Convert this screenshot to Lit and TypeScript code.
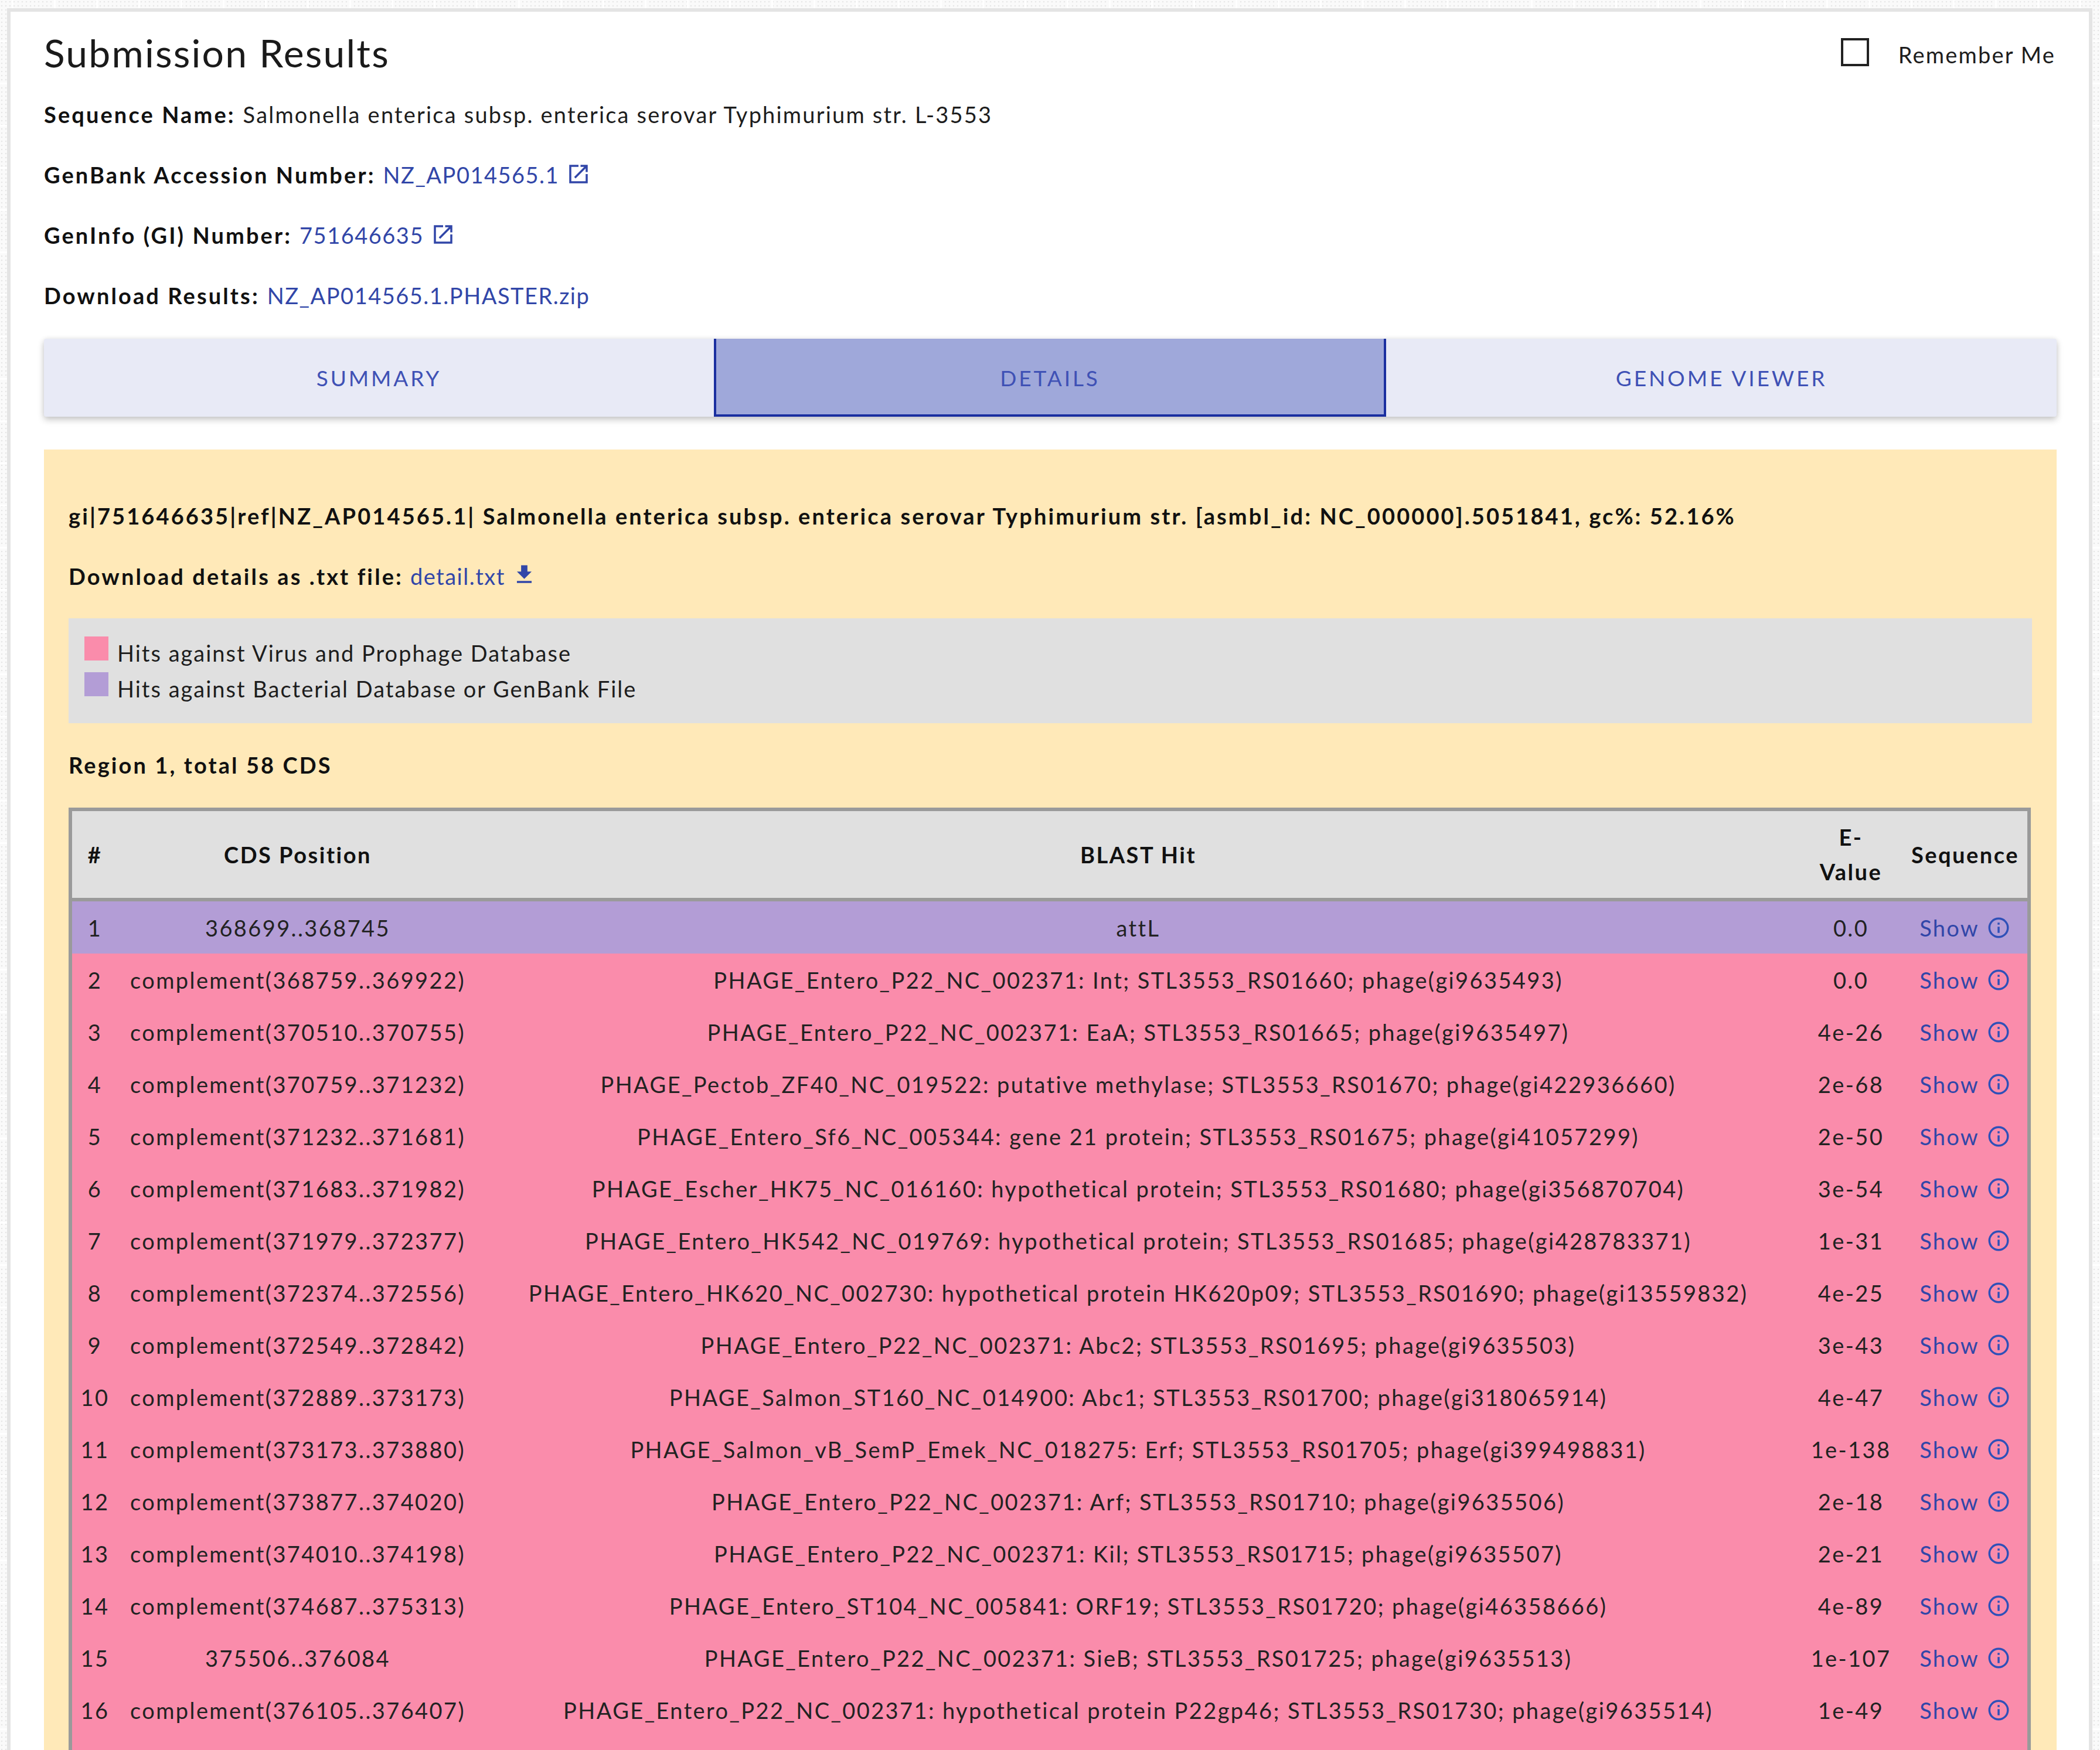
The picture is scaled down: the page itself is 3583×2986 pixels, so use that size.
import { LitElement, html, css } from "lit";
import { customElement } from "lit/decorators.js";

const ROWS: [string, string, string, string][] = [
  ["1", "368699..368745", "attL", "0.0"],
  ["2", "complement(368759..369922)", "PHAGE_Entero_P22_NC_002371: Int; STL3553_RS01660; phage(gi9635493)", "0.0"],
  ["3", "complement(370510..370755)", "PHAGE_Entero_P22_NC_002371: EaA; STL3553_RS01665; phage(gi9635497)", "4e-26"],
  ["4", "complement(370759..371232)", "PHAGE_Pectob_ZF40_NC_019522: putative methylase; STL3553_RS01670; phage(gi422936660)", "2e-68"],
  ["5", "complement(371232..371681)", "PHAGE_Entero_Sf6_NC_005344: gene 21 protein; STL3553_RS01675; phage(gi41057299)", "2e-50"],
  ["6", "complement(371683..371982)", "PHAGE_Escher_HK75_NC_016160: hypothetical protein; STL3553_RS01680; phage(gi356870704)", "3e-54"],
  ["7", "complement(371979..372377)", "PHAGE_Entero_HK542_NC_019769: hypothetical protein; STL3553_RS01685; phage(gi428783371)", "1e-31"],
  ["8", "complement(372374..372556)", "PHAGE_Entero_HK620_NC_002730: hypothetical protein HK620p09; STL3553_RS01690; phage(gi13559832)", "4e-25"],
  ["9", "complement(372549..372842)", "PHAGE_Entero_P22_NC_002371: Abc2; STL3553_RS01695; phage(gi9635503)", "3e-43"],
  ["10", "complement(372889..373173)", "PHAGE_Salmon_ST160_NC_014900: Abc1; STL3553_RS01700; phage(gi318065914)", "4e-47"],
  ["11", "complement(373173..373880)", "PHAGE_Salmon_vB_SemP_Emek_NC_018275: Erf; STL3553_RS01705; phage(gi399498831)", "1e-138"],
  ["12", "complement(373877..374020)", "PHAGE_Entero_P22_NC_002371: Arf; STL3553_RS01710; phage(gi9635506)", "2e-18"],
  ["13", "complement(374010..374198)", "PHAGE_Entero_P22_NC_002371: Kil; STL3553_RS01715; phage(gi9635507)", "2e-21"],
  ["14", "complement(374687..375313)", "PHAGE_Entero_ST104_NC_005841: ORF19; STL3553_RS01720; phage(gi46358666)", "4e-89"],
  ["15", "375506..376084", "PHAGE_Entero_P22_NC_002371: SieB; STL3553_RS01725; phage(gi9635513)", "1e-107"],
  ["16", "complement(376105..376407)", "PHAGE_Entero_P22_NC_002371: hypothetical protein P22gp46; STL3553_RS01730; phage(gi9635514)", "1e-49"],
];

const extIcon = html`<svg class="ext" viewBox="0 0 24 24" aria-hidden="true"><path fill="currentColor" d="M19 19H5V5h7V3H3v18h18v-9h-2v7zM14 3v2h3.59l-9.83 9.83 1.41 1.41L19 6.41V10h2V3h-7z"/></svg>`;
const dlIcon = html`<svg class="dl" viewBox="0 0 24 24" aria-hidden="true"><path fill="currentColor" d="M19 9h-4V3H9v6H5l7 7 7-7zM5 18v2h14v-2H5z"/></svg>`;
const infoIcon = html`<svg class="info" viewBox="0 0 24 24" aria-hidden="true"><path fill="currentColor" d="M11 7h2v2h-2zm0 4h2v6h-2zm1-9a10 10 0 1 0 0 20 10 10 0 0 0 0-20zm0 18a8 8 0 1 1 0-16 8 8 0 0 1 0 16z"/></svg>`;

@customElement("app-root")
export class AppRoot extends LitElement {
  static styles = css`
    :host {
      display: block;
      height: 2986px;
      overflow: hidden;
      box-sizing: border-box;
      padding: 14px 13px 0 12px;
      font-family: "Lato", "Open Sans", sans-serif;
      font-size: 38px;
      letter-spacing: 2.2px;
      color: #1d1d1d;
      background-color: #fafafa;
      background-image:
        linear-gradient(#fff 3px, transparent 3px),
        linear-gradient(90deg, #fff 3px, transparent 3px),
        radial-gradient(circle at 3px 3px, #e6e6e6 1.4px, transparent 1.6px);
      background-size: 72px 72px, 72px 72px, 7px 7px;
      background-position: 0 -3px, 20px 0, 0 0;
    }
    a { color: #3146a8; text-decoration: none; }
    .line a { letter-spacing: 1.5px; }
    .card {
      background: #fff;
      border: 6px solid #e4e4e4;
      border-bottom: none;
      padding: 0 55px 0 57px;
      height: 3000px;
      box-sizing: border-box;
    }
    .head {
      height: 126px;
      display: flex;
      justify-content: space-between;
      align-items: flex-start;
    }
    h2 {
      margin: 0;
      padding-top: 28px;
      font-size: 66px;
      line-height: 84px;
      font-weight: 400;
      letter-spacing: 2.2px;
      color: #1a1a1a;
    }
    .remember {
      display: flex;
      align-items: flex-start;
      padding-top: 45px;
      margin-right: 2px;
    }
    .box {
      width: 48px;
      height: 48px;
      box-sizing: border-box;
      border: 4px solid #222;
      margin-right: 50px;
    }
    .remember span { line-height: 57px; }
    .line { height: 103px; line-height: 97px; white-space: nowrap; }
    .card > .line { line-height: 99px; }
    .line b { font-weight: 700; color: #111; letter-spacing: 3.1px; }
    .label { margin-right: 1px; }
    .ext { width: 42px; height: 42px; vertical-align: -5px; margin-left: 12px; color: #3146a8; }
    .dl { width: 43px; height: 43px; vertical-align: -4px; margin-left: 11px; color: #3146a8; }
    .tabs {
      margin-top: 20px;
      height: 133px;
      display: grid;
      grid-template-columns: 1143px 1147px 1fr;
      background: #e8eaf6;
      border-radius: 4px;
      box-shadow: 0 5px 12px rgba(0, 0, 0, 0.22), 0 0 8px rgba(0, 0, 0, 0.06);
    }
    .tab {
      display: flex;
      align-items: center;
      justify-content: center;
      color: #3f51b5;
      letter-spacing: 3.9px;
      font-size: 37px;
    }
    .tab.active {
      background: #9fa8da;
      border: 4px solid #1a2fa0;
      border-top: none;
      padding-top: 4px;
      box-sizing: border-box;
    }
    .panel {
      margin-top: 56px;
      background: #ffe9b8;
      padding: 65px 42px 0;
      height: 2300px;
      box-sizing: border-box;
    }
    .legend {
      margin-top: 17px;
      height: 179px;
      box-sizing: border-box;
      padding: 31px 27px 0;
      background: #e0e0e0;
      letter-spacing: 2px;
    }
    .legend div { display: flex; height: 61px; align-items: flex-start; }
    .legend i {
      width: 41px;
      height: 41px;
      margin-right: 15px;
      flex: none;
    }
    .legend span { line-height: 56px; }
    .pink { background: #fa8cab; }
    .purple { background: #b39dd6; }
    .region { margin-top: 23px; }
    table {
      margin-top: 18px;
      width: 3348px;
      border-collapse: separate;
      border-spacing: 0;
      border: 6px solid #9a9a9a;
      table-layout: fixed;
    }
    th {
      background: #e0e0e0;
      height: 148px;
      padding: 0;
      border-bottom: 6px solid #9a9a9a;
      font-weight: 700;
      color: #111;
      line-height: 59px;
      letter-spacing: 2.5px;
    }
    td {
      height: 89px;
      padding: 0;
      text-align: center;
      white-space: nowrap;
      color: #222;
      letter-spacing: 2.4px;
    }
    .show { display: inline-flex; align-items: center; gap: 12px; letter-spacing: 2.2px; }
    .info { width: 42px; height: 42px; color: #2f50b8; }
    .c1 { width: 78px; }
    .c2 { width: 614px; }
    .c3 { width: 2254px; }
    .c4 { width: 178px; }
    .c5 { width: 212px; }
  `;

  render() {
    return html`
      <div class="card">
        <div class="head">
          <h2>Submission Results</h2>
          <div class="remember"><div class="box"></div><span>Remember Me</span></div>
        </div>
        <div class="line"><b class="label">Sequence Name:</b> Salmonella enterica subsp. enterica serovar Typhimurium str. L-3553</div>
        <div class="line"><b class="label">GenBank Accession Number:</b> <a>NZ_AP014565.1</a>${extIcon}</div>
        <div class="line"><b class="label">GenInfo (GI) Number:</b> <a>751646635</a>${extIcon}</div>
        <div class="line"><b class="label">Download Results:</b> <a>NZ_AP014565.1.PHASTER.zip</a></div>
        <div class="tabs">
          <div class="tab">SUMMARY</div>
          <div class="tab active">DETAILS</div>
          <div class="tab">GENOME VIEWER</div>
        </div>
        <div class="panel">
          <div class="line"><b>gi|751646635|ref|NZ_AP014565.1| Salmonella enterica subsp. enterica serovar Typhimurium str. [asmbl_id: NC_000000].5051841, gc%: 52.16%</b></div>
          <div class="line"><b>Download details as .txt file:</b> <a>detail.txt</a>${dlIcon}</div>
          <div class="legend">
            <div><i class="pink"></i><span>Hits against Virus and Prophage Database</span></div>
            <div><i class="purple"></i><span>Hits against Bacterial Database or GenBank File</span></div>
          </div>
          <div class="line region"><b>Region 1, total 58 CDS</b></div>
          <table>
            <colgroup><col class="c1" /><col class="c2" /><col class="c3" /><col class="c4" /><col class="c5" /></colgroup>
            <thead>
              <tr><th>#</th><th>CDS Position</th><th>BLAST Hit</th><th>E-<br />Value</th><th>Sequence</th></tr>
            </thead>
            <tbody>
              ${ROWS.map(
                (r, i) => html`<tr class=${i === 0 ? "purple" : "pink"}>
                  <td>${r[0]}</td><td>${r[1]}</td><td>${r[2]}</td><td>${r[3]}</td>
                  <td><a class="show">Show${infoIcon}</a></td>
                </tr>`
              )}
              <tr class="pink"><td colspan="5"></td></tr>
            </tbody>
          </table>
        </div>
      </div>
    `;
  }
}
